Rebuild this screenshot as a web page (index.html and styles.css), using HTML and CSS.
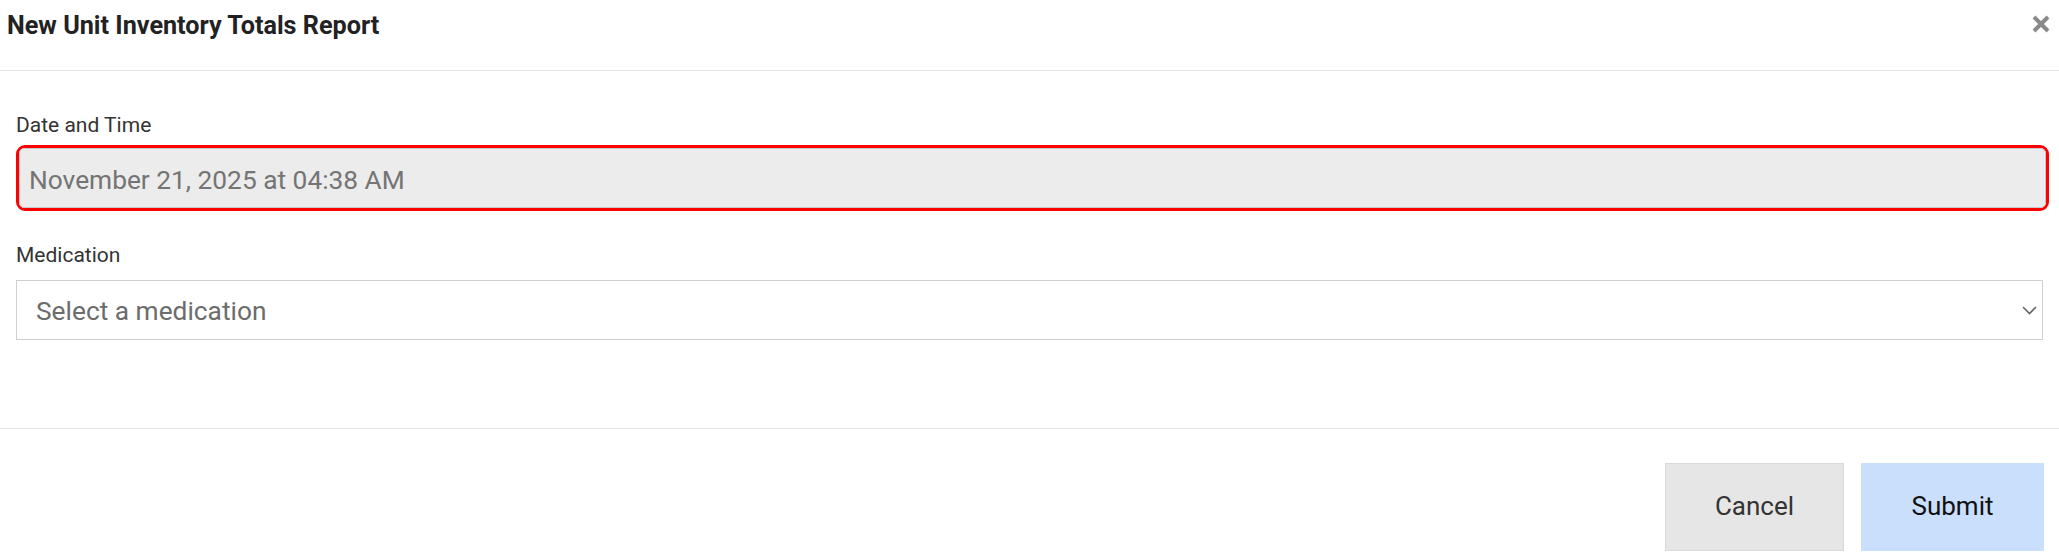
FILE: index.html
```html
<!DOCTYPE html>
<html lang="en">
<head>
<meta charset="utf-8">
<title>New Unit Inventory Totals Report</title>
<link rel="stylesheet" href="styles.css">
</head>
<body>
<div class="modal">
  <div class="modal-header">
    <h1 class="modal-title">New Unit Inventory Totals Report</h1>
    <button class="close-btn" aria-label="Close">
      <svg width="18" height="18" viewBox="0 0 18 18"><path d="M2 2 L16 16 M16 2 L2 16" stroke="#8a8a8a" stroke-width="4" stroke-linecap="butt"/></svg>
    </button>
  </div>
  <div class="modal-body">
    <div class="field">
      <div class="label">Date and Time</div>
      <div class="date-wrap">
        <div class="date-input">November 21, 2025 at 04:38 AM</div>
      </div>
    </div>
    <div class="field field-med">
      <div class="label">Medication</div>
      <div class="select">
        <span class="placeholder">Select a medication</span>
        <svg class="chevron" width="15" height="9" viewBox="0 0 15 9"><path d="M1 1 L7.5 7.5 L14 1" fill="none" stroke="#666" stroke-width="1.6"/></svg>
      </div>
    </div>
  </div>
  <div class="modal-footer">
    <button class="btn btn-cancel">Cancel</button>
    <button class="btn btn-submit">Submit</button>
  </div>
</div>
</body>
</html>
```

FILE: styles.css
```css
* { box-sizing: border-box; }
html, body { margin: 0; padding: 0; background: #fff; }
body { font-family: Roboto, "Liberation Sans", Arial, sans-serif; color: #333; }

.modal { width: 2059px; height: 556px; overflow: hidden; }

.modal-header {
  height: 71px;
  border-bottom: 1px solid #e6e6e6;
  display: flex;
  justify-content: space-between;
  align-items: flex-start;
  padding: 11px 9px 0 7px;
}
.modal-title {
  margin: 0;
  font-size: 25.2px;
  line-height: 30px;
  font-weight: 700;
  color: #222;
}
.close-btn {
  margin-top: 4px;
  padding: 0;
  border: 0;
  background: none;
  width: 18px;
  height: 18px;
  display: flex;
}

.modal-body {
  padding: 41px 16px 0 16px;
  height: 358px;
  border-bottom: 1px solid #e6e6e6;
}
.label {
  font-size: 21px;
  line-height: 27px;
  color: #333;
  margin-bottom: 6px;
}
.date-wrap {
  margin-right: -6px;
  border: 3px solid #ff0000;
  border-radius: 9px;
}
.date-input {
  height: 60px;
  border: 1px solid #c8c8c8;
  border-radius: 5px;
  background: #ececec;
  padding: 3px 9px 0 9px;
  display: flex;
  align-items: center;
  font-size: 26.3px;
  color: #747474;
}
.field-med { margin-top: 31px; }
.field-med .label { margin-bottom: 11px; }
.select {
  height: 60px;
  border: 1px solid #d0d0d0;
  background: #fff;
  display: flex;
  align-items: center;
  justify-content: space-between;
  padding: 2px 5px 0 19px;
  font-size: 26.3px;
  color: #6c6c6c;
}
.chevron { display: block; margin-top: -1px; }

.modal-footer {
  display: flex;
  justify-content: flex-end;
  gap: 17px;
  padding: 34px 15px 0 0;
}
.btn {
  height: 88px;
  padding: 0 0 2px 0;
  font-family: Roboto, "Liberation Sans", Arial, sans-serif;
  font-size: 26px;
  border-radius: 0;
  cursor: pointer;
}
.btn-cancel {
  width: 179px;
  background: #e6e6e6;
  border: 1px solid #d9d9d9;
  color: #333;
}
.btn-submit {
  width: 183px;
  background: #cadffb;
  border: 0;
  color: #111;
}
```
